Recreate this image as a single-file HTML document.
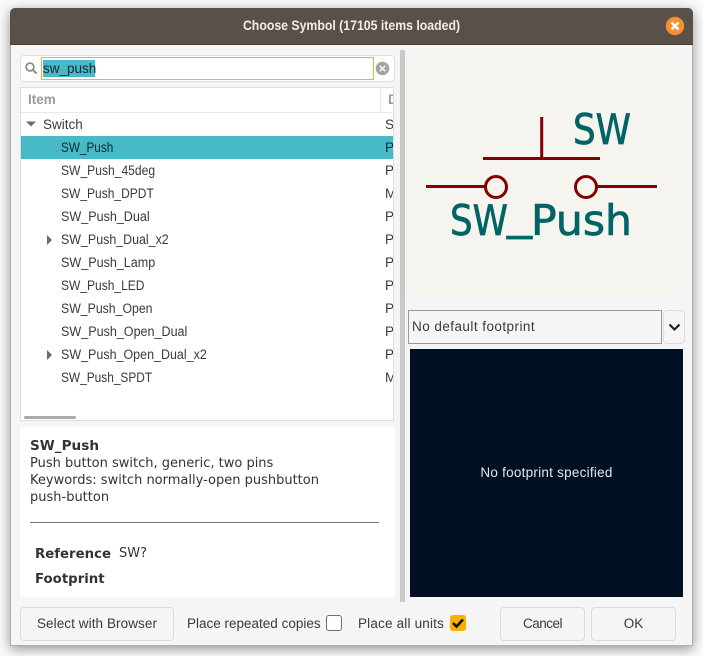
<!DOCTYPE html>
<html>
<head>
<meta charset="utf-8">
<style>
html,body{margin:0;padding:0;width:703px;height:656px;overflow:hidden;background:#fafafa;}
*{box-sizing:border-box;}
.a{position:absolute;}
.t{position:absolute;white-space:nowrap;font-family:"Liberation Sans",sans-serif;font-size:13.5px;color:#3a3a3a;line-height:16px;transform-origin:0 50%;}
.d{position:absolute;white-space:nowrap;font-family:"DejaVu Sans",sans-serif;font-size:13px;color:#333;line-height:17px;}
.b{font-size:13.3px;font-weight:bold;}
.c{width:8px;overflow:hidden;left:385px;}
.btn{position:absolute;background:#f5f5f5;border:1px solid #dcdcdc;border-radius:4px;}
</style>
</head>
<body>
<div class="a" style="left:10px;top:8px;width:683px;height:638px;background:#f5f5f5;border-radius:5px 5px 0 0;box-shadow:0 3px 12px rgba(0,0,0,.42);outline:1px solid rgba(90,90,90,.45);outline-offset:-1px;"></div>
<div class="a" style="left:10px;top:8px;width:683px;height:37px;background:#5a504a;border-radius:5px 5px 0 0;border-bottom:1px solid #463e39;"></div>
<div class="t" style="left:0;top:18px;width:703px;text-align:center;color:#f0eeec;font-weight:bold;transform:scaleX(.91);transform-origin:50% 50%;">Choose Symbol (17105 items loaded)</div>
<svg class="a" style="left:665px;top:16px" width="20" height="20"><circle cx="10" cy="10" r="9.2" fill="#f6902e"/><path d="M6.5 6.5L13.5 13.5M13.5 6.5L6.5 13.5" stroke="#fff" stroke-width="2.4"/></svg>

<!-- search -->
<div class="a" style="left:20px;top:55px;width:375px;height:27px;background:#fff;border:1px solid #e0e0e0;border-radius:4px;"></div>
<svg class="a" style="left:24px;top:61px" width="14" height="14"><circle cx="6" cy="6" r="3.9" fill="none" stroke="#8a8a8a" stroke-width="1.7"/><path d="M9 9L12.6 12.6" stroke="#8a8a8a" stroke-width="2"/></svg>
<div class="a" style="left:41px;top:57px;width:333px;height:23px;background:#fff;border:1px solid #f5b027;"></div>
<div class="a" style="left:43px;top:60px;width:52px;height:17px;background:#48b9c7;"></div>
<div class="t" style="left:43px;top:61px;color:#0e2a2e;">sw_push</div>
<svg class="a" style="left:375px;top:61px" width="15" height="15"><circle cx="7.5" cy="7.5" r="6.8" fill="#a3a3a3"/><path d="M4.8 4.8L10.2 10.2M10.2 4.8L4.8 10.2" stroke="#f4f4f4" stroke-width="1.6"/></svg>

<!-- list -->
<div class="a" style="left:20px;top:87px;width:374px;height:334px;background:#fff;border:1px solid #dedede;"></div>
<div class="a" style="left:21px;top:112px;width:372px;height:1px;background:#e8e8e8;"></div>
<div class="a" style="left:380px;top:88px;width:1px;height:24px;background:#e8e8e8;"></div>
<div class="t" style="left:28px;top:92px;color:#9a9a9a;font-weight:bold;">Item</div>
<div class="t" style="left:388px;top:92px;color:#9a9a9a;font-weight:bold;width:5px;overflow:hidden;">D</div>
<svg class="a" style="left:26px;top:120px" width="12" height="8"><path d="M0 1.5H10L5 6.5Z" fill="#6c6c6c"/></svg>
<div class="t" style="left:43px;top:117px;">Switch</div>
<div class="t c" style="top:117px;">S</div>
<div class="a" style="left:21px;top:136px;width:372px;height:23px;background:#48b9c7;"></div>
<div class="t" style="left:61px;top:140px;color:#0e2a2e;transform:scaleX(.87);">SW_Push</div><div class="t c" style="top:140px;color:#0e2a2e;">P</div>
<div class="t" style="left:61px;top:163px;transform:scaleX(.895);">SW_Push_45deg</div><div class="t c" style="top:163px;">P</div>
<div class="t" style="left:61px;top:186px;transform:scaleX(.89);">SW_Push_DPDT</div><div class="t c" style="top:186px;">M</div>
<div class="t" style="left:61px;top:209px;transform:scaleX(.93);">SW_Push_Dual</div><div class="t c" style="top:209px;">P</div>
<svg class="a" style="left:46px;top:234px" width="8" height="12"><path d="M1 1V11L6 6Z" fill="#6c6c6c"/></svg>
<div class="t" style="left:61px;top:232px;transform:scaleX(.92);">SW_Push_Dual_x2</div><div class="t c" style="top:232px;">P</div>
<div class="t" style="left:61px;top:255px;transform:scaleX(.93);">SW_Push_Lamp</div><div class="t c" style="top:255px;">P</div>
<div class="t" style="left:61px;top:278px;transform:scaleX(.89);">SW_Push_LED</div><div class="t c" style="top:278px;">P</div>
<div class="t" style="left:61px;top:301px;transform:scaleX(.91);">SW_Push_Open</div><div class="t c" style="top:301px;">P</div>
<div class="t" style="left:61px;top:324px;transform:scaleX(.93);">SW_Push_Open_Dual</div><div class="t c" style="top:324px;">P</div>
<svg class="a" style="left:46px;top:349px" width="8" height="12"><path d="M1 1V11L6 6Z" fill="#6c6c6c"/></svg>
<div class="t" style="left:61px;top:347px;transform:scaleX(.925);">SW_Push_Open_Dual_x2</div><div class="t c" style="top:347px;">P</div>
<div class="t" style="left:61px;top:370px;transform:scaleX(.88);">SW_Push_SPDT</div><div class="t c" style="top:370px;">M</div>
<div class="a" style="left:24px;top:416px;width:52px;height:3px;background:#aaa;border-radius:2px;"></div>

<!-- info -->
<div class="a" style="left:20px;top:427px;width:375px;height:170px;background:#fff;"></div>
<div class="d b" style="left:30px;top:438px;font-size:13.6px;">SW_Push</div>
<div class="d" style="left:30px;top:455px;">Push button switch, generic, two pins</div>
<div class="d" style="left:30px;top:472px;">Keywords: switch normally-open pushbutton</div>
<div class="d" style="left:30px;top:489px;">push-button</div>
<div class="a" style="left:30px;top:522px;width:349px;height:1px;background:#777;"></div>
<div class="d b" style="left:35px;top:546px;">Reference</div>
<div class="d" style="left:119px;top:545px;">SW?</div>
<div class="d b" style="left:35px;top:571px;">Footprint</div>

<!-- sash -->
<div class="a" style="left:400px;top:50px;width:5px;height:552px;background:#c8c8c8;"></div>

<!-- preview -->
<div class="a" style="left:405px;top:55px;width:273px;height:242px;background:#f5f4ef;"></div>
<svg class="a" style="left:405px;top:55px" width="273" height="242" viewBox="405 55 273 242">
<g fill="none" stroke="#840000" stroke-width="3">
<path d="M541.7 117V158M483 158.5H600M426 186.5H485M597 186.5H657"/>
<circle cx="496" cy="187" r="10.5"/><circle cx="586" cy="187" r="10.5"/>
</g>
<g fill="#006464" stroke="#006464" stroke-width=".7" font-family="'DejaVu Sans',sans-serif" font-size="42">
<text x="573" y="144" textLength="58" lengthAdjust="spacingAndGlyphs">SW</text>
<text x="450" y="235" textLength="58" lengthAdjust="spacingAndGlyphs">SW</text>
<text x="507" y="229" textLength="25" lengthAdjust="spacingAndGlyphs">_</text>
<text x="531" y="235" textLength="101" lengthAdjust="spacingAndGlyphs">Push</text>
</g>
</svg>

<!-- combo -->
<div class="a" style="left:408px;top:310px;width:254px;height:34px;background:#f5f5f5;border:1px solid #999;"></div>
<div class="t" style="left:412px;top:319px;letter-spacing:.45px;">No default footprint</div>
<div class="btn" style="left:663px;top:310px;width:22px;height:34px;"></div>
<svg class="a" style="left:668px;top:323px" width="13" height="9"><path d="M1.5 1.5L6.5 6.5L11.5 1.5" fill="none" stroke="#222" stroke-width="2.2"/></svg>
<div class="a" style="left:410px;top:349px;width:273px;height:248px;background:#001023;"></div>
<div class="t" style="left:410px;top:465px;width:273px;text-align:center;color:#e4e6e8;letter-spacing:.25px;">No footprint specified</div>

<!-- bottom -->
<div class="btn" style="left:20px;top:607px;width:154px;height:34px;"></div>
<div class="t" style="left:20px;top:616px;width:154px;text-align:center;letter-spacing:.08px;">Select with Browser</div>
<div class="t" style="left:187px;top:616px;">Place repeated copies</div>
<div class="a" style="left:326px;top:615px;width:16px;height:16px;background:#fff;border:1px solid #6e6e6e;border-radius:3px;"></div>
<div class="t" style="left:358px;top:616px;letter-spacing:.18px;">Place all units</div>
<div class="a" style="left:450px;top:615px;width:16px;height:16px;background:#ffad00;border-radius:3px;"></div>
<svg class="a" style="left:450px;top:615px" width="16" height="16"><path d="M3 8L6.5 11.5L13 4.5" fill="none" stroke="#111" stroke-width="2.6"/></svg>
<div class="btn" style="left:500px;top:607px;width:85px;height:34px;"></div>
<div class="t" style="left:500px;top:616px;width:85px;text-align:center;letter-spacing:-.5px;">Cancel</div>
<div class="btn" style="left:591px;top:607px;width:85px;height:34px;"></div>
<div class="t" style="left:591px;top:616px;width:85px;text-align:center;">OK</div>
</body>
</html>
